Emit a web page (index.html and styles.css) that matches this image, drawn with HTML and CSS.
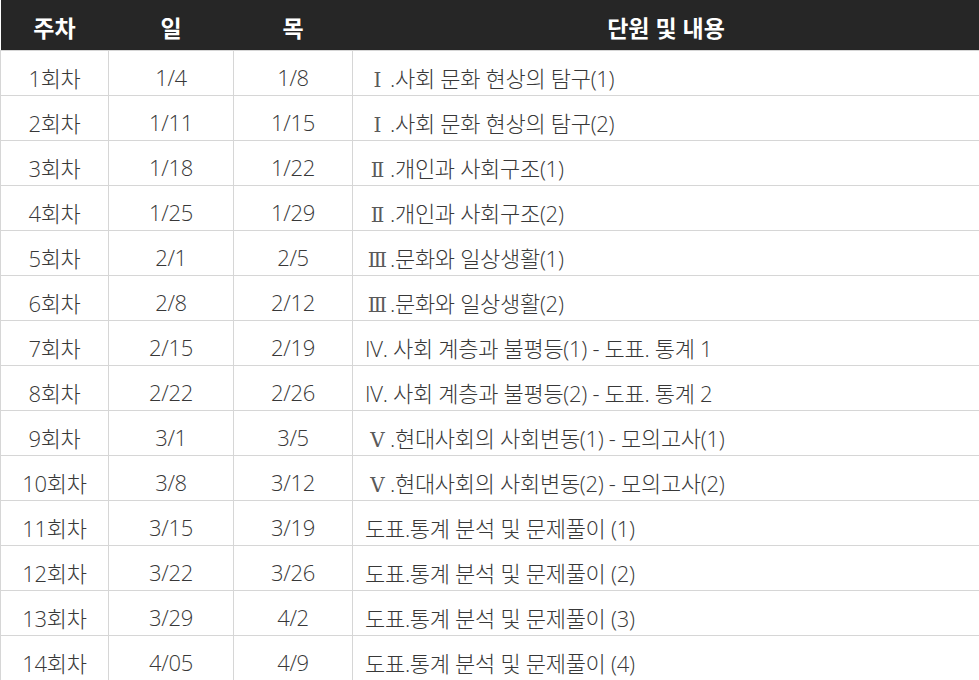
FILE: index.html
```html
<!DOCTYPE html>
<html lang="ko">
<head>
<meta charset="utf-8">
<link rel="stylesheet" href="styles.css">
</head>
<body>
<table class="schedule">
  <colgroup>
    <col class="c-week">
    <col class="c-day">
    <col class="c-thu">
    <col class="c-unit">
  </colgroup>
  <thead>
    <tr><th>주차</th><th>일</th><th>목</th><th>단원 및 내용</th></tr>
  </thead>
  <tbody>
    <tr><td>1회차</td><td>1/4</td><td>1/8</td><td class="unit"><span class="rn">Ⅰ</span>.사회 문화 현상의 탐구(1)</td></tr>
    <tr><td>2회차</td><td>1/11</td><td>1/15</td><td class="unit"><span class="rn">Ⅰ</span>.사회 문화 현상의 탐구(2)</td></tr>
    <tr><td>3회차</td><td>1/18</td><td>1/22</td><td class="unit"><span class="rn">Ⅱ</span>.개인과 사회구조(1)</td></tr>
    <tr><td>4회차</td><td>1/25</td><td>1/29</td><td class="unit"><span class="rn">Ⅱ</span>.개인과 사회구조(2)</td></tr>
    <tr><td>5회차</td><td>2/1</td><td>2/5</td><td class="unit"><span class="rn">Ⅲ</span>.문화와 일상생활(1)</td></tr>
    <tr><td>6회차</td><td>2/8</td><td>2/12</td><td class="unit"><span class="rn">Ⅲ</span>.문화와 일상생활(2)</td></tr>
    <tr><td>7회차</td><td>2/15</td><td>2/19</td><td class="unit">IV. 사회 계층과 불평등(1) - 도표. 통계 1</td></tr>
    <tr><td>8회차</td><td>2/22</td><td>2/26</td><td class="unit">IV. 사회 계층과 불평등(2) - 도표. 통계 2</td></tr>
    <tr><td>9회차</td><td>3/1</td><td>3/5</td><td class="unit"><span class="rn">Ⅴ</span>.현대사회의 사회변동(1) - 모의고사(1)</td></tr>
    <tr><td>10회차</td><td>3/8</td><td>3/12</td><td class="unit"><span class="rn">Ⅴ</span>.현대사회의 사회변동(2) - 모의고사(2)</td></tr>
    <tr><td>11회차</td><td>3/15</td><td>3/19</td><td class="unit">도표.통계 분석 및 문제풀이 (1)</td></tr>
    <tr><td>12회차</td><td>3/22</td><td>3/26</td><td class="unit">도표.통계 분석 및 문제풀이 (2)</td></tr>
    <tr><td>13회차</td><td>3/29</td><td>4/2</td><td class="unit">도표.통계 분석 및 문제풀이 (3)</td></tr>
    <tr><td>14회차</td><td>4/05</td><td>4/9</td><td class="unit">도표.통계 분석 및 문제풀이 (4)</td></tr>
  </tbody>
</table>
</body>
</html>
```

FILE: styles.css
```css
html, body {
  margin: 0;
  padding: 0;
  background: #ffffff;
}

.schedule {
  width: 979px;
  border-collapse: collapse;
  table-layout: fixed;
  font-family: "Open Sans", "Noto Sans CJK KR", sans-serif;
  letter-spacing: -0.3px;
}

.c-week { width: 108px; }
.c-day { width: 125px; }
.c-thu { width: 119px; }
.c-unit { width: 627px; }

.schedule th {
  height: 50px;
  padding: 5px 0 0;
  box-sizing: border-box;
  background: #262626;
  color: #ffffff;
  font-size: 23px;
  font-weight: 700;
  letter-spacing: 0;
  text-align: center;
  vertical-align: middle;
  border: 0;
}

.schedule td {
  height: 45px;
  box-sizing: border-box;
  padding: 9px 0 0;
  border: 1px solid #d6d6d6;
  color: #383838;
  font-size: 22px;
  font-weight: 300;
  text-align: center;
  vertical-align: middle;
  white-space: nowrap;
}

.schedule td.unit {
  text-align: left;
  padding-left: 12px;
}

.rn {
  display: inline-block;
  width: 25px;
  text-align: center;
  font-family: "DejaVu Serif", serif;
  font-size: 20px;
  color: #5a5a5a;
  letter-spacing: 0;
}
```
